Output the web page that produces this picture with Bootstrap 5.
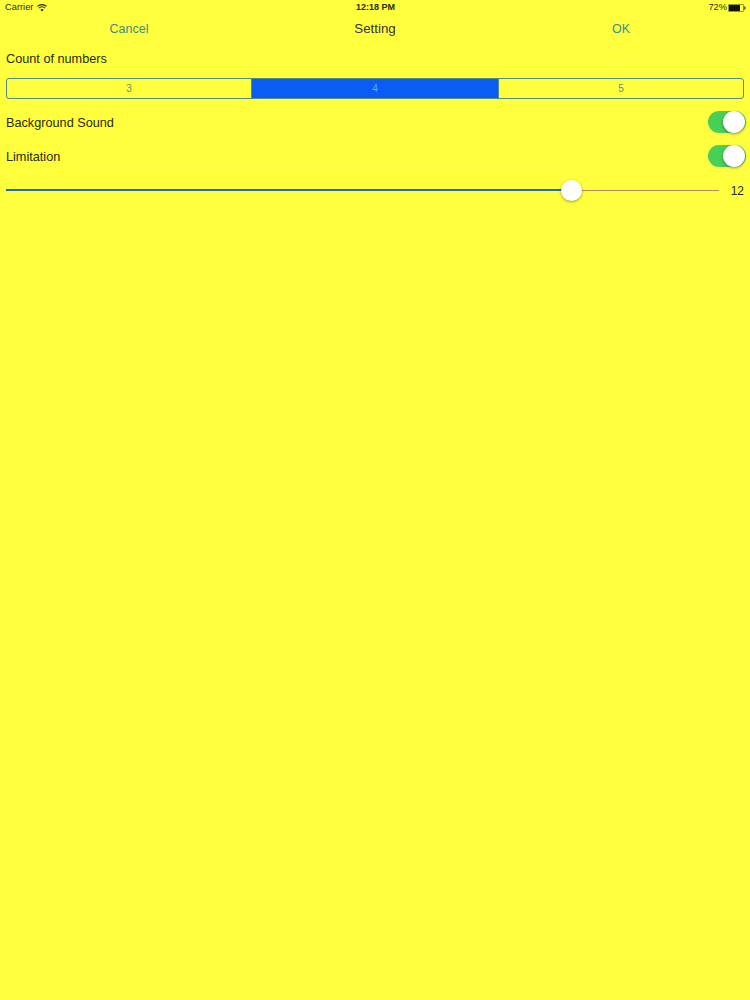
<!DOCTYPE html>
<html lang="en">
<head>
<meta charset="utf-8">
<title>Setting</title>
<link href="https://cdn.jsdelivr.net/npm/bootstrap@5.3.0/dist/css/bootstrap.min.css" rel="stylesheet">
<style>
html,body{height:100%}
body{background:#ffff3e;color:#2a2a14;font-family:"Liberation Sans",Arial,sans-serif;font-size:12.7px;overflow:hidden}
.status-bar{height:15px;padding:0 4px 0 5px;font-size:9.3px;line-height:15px;color:#2a2a14}
.status-col{flex:1 1 0}
.status-time{font-weight:700;font-size:9px}
.nav-bar{height:28px;font-size:12.5px}
.nav-side{width:258px;text-align:center;color:#3a8f86}
.nav-title{flex:1 1 0;text-align:center;color:#333;font-size:13.3px}
.content-pad{padding:0 6px}
.count-label{height:31px;line-height:31px;padding-top:1px}
.segs{height:21px;margin-top:4px;border:1px solid #4f8c88;border-radius:3px;overflow:hidden;font-size:10px}
.seg{flex:1 1 0;text-align:center;line-height:19px;color:#4a9a80}
.seg-first{flex:0 0 244px}
.seg+.seg{border-left:1px solid #4f8c88}
.seg-on{flex:0 0 247px;background:#0a5cf5;color:#5fb6ee}
.opt-row{height:34px}
.first-opt{margin-top:6px}
.opt-text{margin-top:3px}
.sw{width:38px;height:22px;border-radius:11px;background:#48cf58;position:relative;flex:none;margin-right:-2px}
.sw-knob{position:absolute;top:0;right:1px;width:22px;height:22px;border-radius:50%;background:#fff;box-shadow:0 1px 3px rgba(0,0,0,.4)}
.slide-row{height:34px}
.track{flex:1 1 0;height:1px;position:relative;background:#b8895a}
.track-fill{position:absolute;left:0;top:-.25px;height:1.5px;background:#1f6fb0}
.thumb{position:absolute;top:-10px;width:21px;height:21px;margin-left:-10px;border-radius:50%;background:#fff;box-shadow:0 1px 3px rgba(0,0,0,.4)}
.slide-val{width:25px;text-align:right;font-size:12px;margin-top:2px}
.bat{width:18px;height:8px;margin-left:1px}
</style>
</head>
<body>
<div class="status-bar d-flex align-items-center">
  <div class="status-col d-flex align-items-center gap-1">Carrier
    <svg width="10" height="8" viewBox="0 0 10 8"><path d="M5 7.6 L3.4 5.7 A2.5 2.5 0 0 1 6.6 5.7Z" fill="#222"/><path d="M1.9 4.1 A4.7 4.7 0 0 1 8.1 4.1" fill="none" stroke="#222" stroke-width="1.1"/><path d="M.4 2.4 A6.8 6.8 0 0 1 9.6 2.4" fill="none" stroke="#222" stroke-width="1.1"/></svg>
  </div>
  <div class="status-time">12:18 PM</div>
  <div class="status-col d-flex align-items-center justify-content-end">72%
    <svg class="bat" viewBox="0 0 18 8"><rect x=".3" y=".3" width="15.4" height="7.4" rx="1.3" fill="none" stroke="#222" stroke-width=".6"/><rect x="1" y="1" width="11" height="6" fill="#111"/><rect x="16.3" y="2.6" width="1.1" height="2.8" fill="#222"/></svg>
  </div>
</div>
<div class="nav-bar d-flex align-items-center">
  <div class="nav-side">Cancel</div>
  <div class="nav-title">Setting</div>
  <div class="nav-side">OK</div>
</div>
<div class="content-pad">
  <div class="count-label">Count of numbers</div>
  <div class="segs d-flex">
    <div class="seg seg-first">3</div>
    <div class="seg seg-on">4</div>
    <div class="seg">5</div>
  </div>
  <div class="opt-row first-opt d-flex align-items-center justify-content-between">
    <span class="opt-text">Background Sound</span><div class="sw"><div class="sw-knob"></div></div>
  </div>
  <div class="opt-row d-flex align-items-center justify-content-between">
    <span class="opt-text">Limitation</span><div class="sw"><div class="sw-knob"></div></div>
  </div>
  <div class="slide-row d-flex align-items-center">
    <div class="track"><div class="track-fill" style="width:79.2%"></div><div class="thumb" style="left:79.2%"></div></div>
    <div class="slide-val">12</div>
  </div>
</div>
</body>
</html>
